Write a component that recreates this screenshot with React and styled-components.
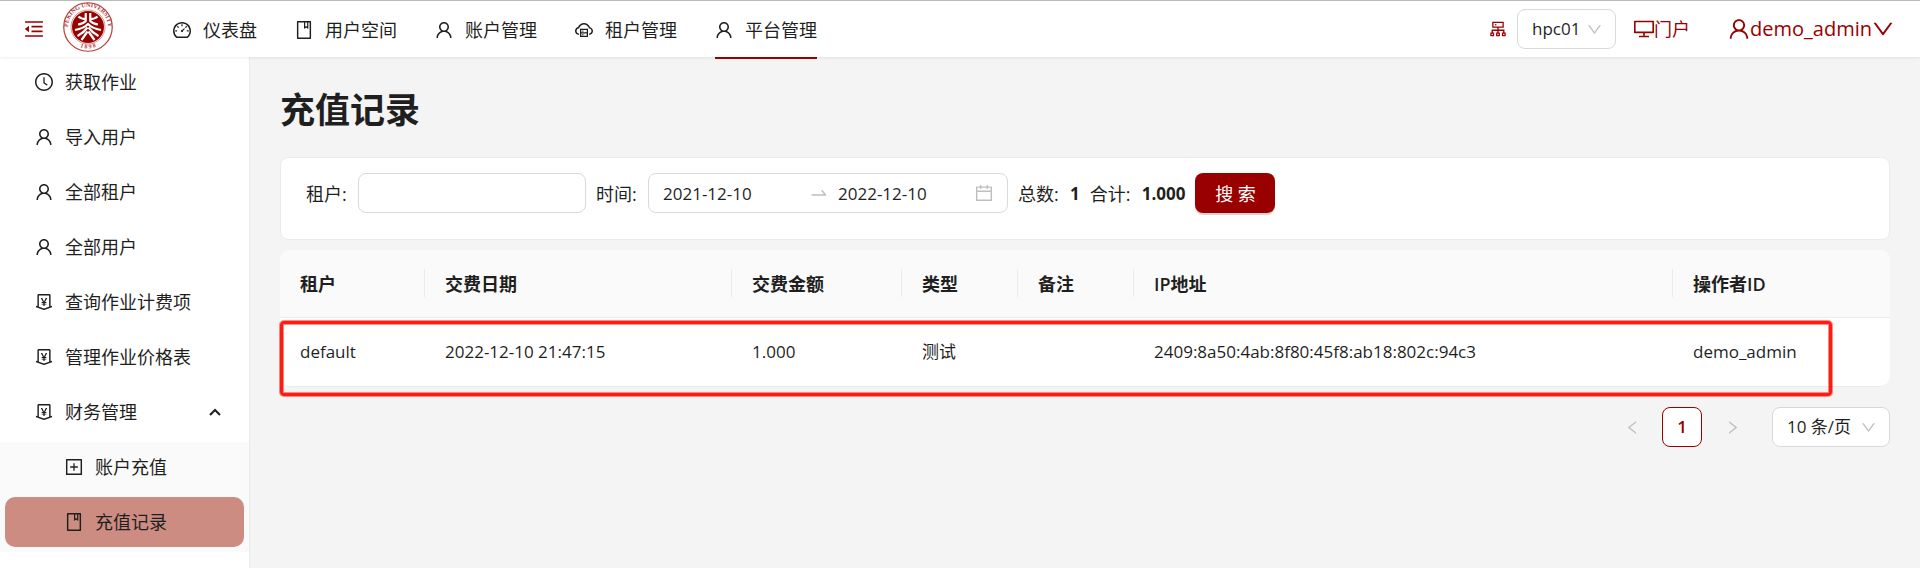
import React from "react";
import styled, { createGlobalStyle, ThemeProvider, css } from "styled-components";
import {
  AiOutlineMenuFold,
  AiOutlineDashboard,
  AiOutlineBook,
  AiOutlineUser,
  AiOutlineCloudServer,
  AiOutlineCluster,
  AiOutlineDesktop,
  AiOutlineDown,
  AiOutlineClockCircle,
  AiOutlineMoneyCollect,
  AiOutlinePlusSquare,
  AiOutlineSwapRight,
  AiOutlineCalendar,
  AiOutlineLeft,
  AiOutlineRight,
} from "react-icons/ai";

const theme = {
  primary: "#990000",
  selected: "#cd8c82",
  text: "#1f1f1f",
  muted: "#bfbfbf",
  border: "#d9d9d9",
  split: "#ebebeb",
  page: "#f4f4f4",
  subtle: "#fafafa",
};

const GlobalStyle = createGlobalStyle`
  *, *::before, *::after { box-sizing: border-box; }
  body {
    margin: 0;
    background: ${theme.page};
    color: ${theme.text};
    font-family: "Open Sans", "Noto Sans CJK SC", sans-serif;
    font-size: 17px;
    line-height: 28px;
  }
  button, input, select { font: inherit; color: inherit; }
`;

const Page = styled.div`
  display: flex;
  flex-direction: column;
  min-height: 100vh;
`;

/* ---------- header ---------- */

const Header = styled.header`
  position: relative;
  z-index: 1;
  display: flex;
  align-items: center;
  height: 57px;
  padding: 0 26px 0 24px;
  background: #fff;
  border-top: 1px solid #bbb;
  box-shadow: 0 1px 3px rgba(0, 0, 0, 0.08);
`;

const IconButton = styled.button`
  display: flex;
  padding: 0;
  border: 0;
  background: none;
  color: ${(p) => p.theme.primary};
  cursor: pointer;
`;

const LogoLink = styled.a`
  display: flex;
  margin: 0 60px 4px 19px;
`;

const Nav = styled.nav`
  display: flex;
  align-self: stretch;
  gap: 38px;
  font-size: 18px;
`;

const NavLink = styled.a`
  display: flex;
  align-items: center;
  gap: 12px;
  padding-top: 2px;
  color: inherit;
  text-decoration: none;
  white-space: nowrap;
  border-bottom: 2px solid ${(p) => (p.$active ? p.theme.primary : "transparent")};
  margin-bottom: -2px;
`;

const HeaderTools = styled.div`
  display: flex;
  align-items: center;
  margin-left: auto;
  color: ${(p) => p.theme.primary};
`;

const ClusterPicker = styled.div`
  display: flex;
  align-items: center;
  gap: 10px;
`;

const PortalLink = styled.a`
  display: flex;
  align-items: center;
  margin: 0 38px 0 18px;
  color: inherit;
  font-size: 18px;
  text-decoration: none;
`;

const UserButton = styled(IconButton)`
  align-items: center;
  font-size: 20px;
`;

const SelectBox = styled.span`
  position: relative;
  display: flex;
  align-items: center;
  width: ${(p) => p.$width}px;
  height: 40px;
  color: ${(p) => p.theme.text};

  svg {
    position: absolute;
    right: 14px;
    color: ${(p) => p.theme.muted};
    pointer-events: none;
  }
`;

const Select = styled.select`
  width: 100%;
  height: 100%;
  padding: 0 14px;
  appearance: none;
  background: #fff;
  border: 1px solid ${(p) => p.theme.border};
  border-radius: 8px;
`;

/* ---------- side menu ---------- */

const Body = styled.div`
  display: flex;
  flex: 1;
`;

const Sidebar = styled.aside`
  flex: 0 0 250px;
  background: #fff;
  border-right: 1px solid ${(p) => p.theme.split};
`;

const Menu = styled.ul`
  display: flex;
  flex-direction: column;
  gap: 5px;
  margin: 0;
  padding: 0;
  list-style: none;
  font-size: 18px;
`;

const SubMenu = styled(Menu)`
  padding-bottom: 5px;
  margin-top: 5px;
  background: ${(p) => p.theme.subtle};
`;

const itemStyle = css`
  display: flex;
  align-items: center;
  gap: 12px;
  height: 50px;
  margin: 0 5px;
  padding: 0 23px 0 ${(p) => (p.$nested ? 60 : 30)}px;
  border-radius: 10px;
`;

const MenuLink = styled.a`
  ${itemStyle}
  color: inherit;
  text-decoration: none;
  background: ${(p) => (p.$active ? p.theme.selected : "transparent")};
`;

const MenuToggle = styled.button`
  ${itemStyle}
  width: calc(100% - 10px);
  border: 0;
  background: none;
  cursor: pointer;
`;

const Arrow = styled.svg`
  margin-left: auto;
`;

/* ---------- content ---------- */

const Content = styled.main`
  flex: 1;
  min-width: 0;
  padding: 30px 30px 40px;
`;

const Title = styled.h1`
  margin: 0 0 24px;
  font-size: 35px;
  line-height: 46px;
  font-weight: 700;
`;

const FilterCard = styled.form`
  display: flex;
  flex-wrap: wrap;
  gap: 10px;
  margin-bottom: 10px;
  padding: 15px 25px 26px;
  background: #fff;
  border: 1px solid ${(p) => p.theme.split};
  border-radius: 8px;
`;

const Field = styled.div`
  display: flex;
  align-items: center;
`;

const Label = styled.label`
  min-width: 52px;
  padding-top: 2px;
  font-size: 18px;
`;

const TextInput = styled.input`
  width: 228px;
  height: 40px;
  padding: 0 14px;
  border: 1px solid ${(p) => p.theme.border};
  border-radius: 8px;
`;

const RangePicker = styled.div`
  display: flex;
  align-items: center;
  width: 360px;
  height: 40px;
  padding: 0 14px;
  border: 1px solid ${(p) => p.theme.border};
  border-radius: 8px;

  svg {
    flex: none;
    color: ${(p) => p.theme.muted};
  }
`;

const DateInput = styled.input`
  flex: 1;
  min-width: 0;
  padding: 2px 0 0;
  border: 0;
  background: none;
`;

const RangeArrow = styled.span`
  display: flex;
  padding: 0 10px;
`;

const Stat = styled.div`
  display: flex;
  align-items: center;
  padding-top: 2px;
`;

const StatName = styled.span`
  min-width: 52px;
  font-size: 18px;
`;

const SearchButton = styled.button`
  width: 80px;
  height: 40px;
  padding: 2px 0 0;
  border: 0;
  border-radius: 8px;
  background: ${(p) => p.theme.primary};
  box-shadow: 0 2px 0 rgba(153, 0, 0, 0.2);
  color: #fff;
  font-size: 18px;
  cursor: pointer;
`;

const TableWrap = styled.div`
  position: relative;
`;

const Table = styled.table`
  width: 100%;
  table-layout: fixed;
  border-collapse: separate;
  border-spacing: 0;
  background: #fff;
  border-radius: 10px;
`;

const HeadCell = styled.th`
  position: relative;
  height: 68px;
  padding: 0 20px;
  background: ${(p) => p.theme.subtle};
  border-bottom: 1px solid ${(p) => p.theme.split};
  text-align: left;
  font-size: 18px;
  font-weight: 600;

  &:first-child { border-top-left-radius: 10px; }
  &:last-child { border-top-right-radius: 10px; }

  &:not(:last-child)::before {
    content: "";
    position: absolute;
    top: 19px;
    right: 0;
    width: 1px;
    height: 28px;
    background: ${(p) => p.theme.split};
  }
`;

const Cell = styled.td`
  height: 69px;
  padding: 0 20px;
  border-bottom: 1px solid ${(p) => p.theme.split};

  &:first-child { border-bottom-left-radius: 10px; }
  &:last-child { border-bottom-right-radius: 10px; }
`;

const Highlight = styled.div`
  position: absolute;
  top: 71px;
  left: 0;
  right: 58px;
  height: 75px;
  border: 3px solid #ff1b10;
  border-radius: 4px;
  box-shadow: 0 0 0 1px rgba(255, 27, 16, 0.5), inset 0 0 0 1px rgba(255, 27, 16, 0.5);
  pointer-events: none;
`;

const Pagination = styled.nav`
  display: flex;
  justify-content: flex-end;
  gap: 10px;
  margin-top: 20px;
`;

const PageButton = styled.button`
  display: flex;
  align-items: center;
  justify-content: center;
  width: 40px;
  height: 40px;
  padding: 0;
  border: 1px solid ${(p) => (p.$current ? p.theme.primary : "transparent")};
  border-radius: 8px;
  background: ${(p) => (p.$current ? "#fff" : "none")};
  color: ${(p) => (p.$current ? p.theme.primary : p.theme.muted)};
  font-weight: 600;
`;

const PageSize = styled.div`
  margin-left: 10px;
`;

/* ---------- drawings ---------- */

function Icon({ of: Glyph, size = 18 }) {
  return <Glyph size={size} viewBox="64 64 896 896" aria-hidden="true" />;
}

function Logo() {
  return (
    <svg width="50" height="50" viewBox="0 0 100 100" role="img" aria-label="Peking University">
      <defs>
        <path id="ringTop" d="M15.4 70 A40 40 0 1 1 84.6 70" />
        <path id="ringBottom" d="M18 79 A44 44 0 0 0 82 79" />
      </defs>
      <circle cx="50" cy="50" r="48.5" fill="#fff" stroke="#b5403f" strokeWidth="2.4" />
      <circle cx="50" cy="50" r="34" fill="#fff" stroke="#c76a6a" strokeWidth="1.5" />
      <circle cx="50" cy="50" r="32" fill="#990000" />
      <g fill="#b03a3a" fontFamily="Liberation Serif, serif" fontWeight="700">
        <text fontSize="12">
          <textPath href="#ringTop" startOffset="50%" textAnchor="middle">PEKING UNIVERSITY</textPath>
        </text>
        <text fontSize="12">
          <textPath href="#ringBottom" startOffset="50%" textAnchor="middle">1 8 9 8</textPath>
        </text>
      </g>
      <g fill="none" stroke="#fff" strokeWidth="4.4" strokeLinecap="butt" strokeLinejoin="round">
        <path d="M45.5 22V38Q40 44 30 45" />
        <path d="M54.5 22V38Q60 44 70 45" />
        <path d="M31 29Q36 34 46 34" />
        <path d="M69 29Q64 34 54 34" />
        <path d="M51 43Q42 53 24 56" />
        <path d="M49 43Q58 53 76 56" />
        <path d="M49 51Q41 62 29 68" />
        <path d="M51 51Q59 62 71 68" />
        <path d="M49 59Q42 69 37 76" />
        <path d="M51 59Q58 69 63 76" />
      </g>
    </svg>
  );
}

/* ---------- data ---------- */

const navItems = [
  { label: "仪表盘", icon: AiOutlineDashboard },
  { label: "用户空间", icon: AiOutlineBook },
  { label: "账户管理", icon: AiOutlineUser },
  { label: "租户管理", icon: AiOutlineCloudServer },
  { label: "平台管理", icon: AiOutlineUser, active: true },
];

const menuItems = [
  { label: "获取作业", icon: AiOutlineClockCircle },
  { label: "导入用户", icon: AiOutlineUser },
  { label: "全部租户", icon: AiOutlineUser },
  { label: "全部用户", icon: AiOutlineUser },
  { label: "查询作业计费项", icon: AiOutlineMoneyCollect },
  { label: "管理作业价格表", icon: AiOutlineMoneyCollect },
];

const financeItems = [
  { label: "账户充值", icon: AiOutlinePlusSquare },
  { label: "充值记录", icon: AiOutlineBook, active: true },
];

const columns = [
  { title: "租户", width: 145 },
  { title: "交费日期", width: 307 },
  { title: "交费金额", width: 170 },
  { title: "类型", width: 116 },
  { title: "备注", width: 116 },
  { title: "IP地址", width: 539 },
  { title: "操作者ID", width: 217 },
];

const records = [
  ["default", "2022-12-10 21:47:15", "1.000", "测试", "", "2409:8a50:4ab:8f80:45f8:ab18:802c:94c3", "demo_admin"],
];

export default function App() {
  return (
    <ThemeProvider theme={theme}>
      <GlobalStyle />
      <Page>
        <Header>
          <IconButton type="button" aria-label="收起菜单">
            <Icon of={AiOutlineMenuFold} size={20} />
          </IconButton>
          <LogoLink href="#">
            <Logo />
          </LogoLink>
          <Nav>
            {navItems.map((item) => (
              <NavLink key={item.label} href="#" $active={item.active}>
                <Icon of={item.icon} />
                {item.label}
              </NavLink>
            ))}
          </Nav>
          <HeaderTools>
            <ClusterPicker>
              <Icon of={AiOutlineCluster} />
              <SelectBox $width={99}>
                <Select aria-label="集群" defaultValue="hpc01">
                  <option>hpc01</option>
                </Select>
                <Icon of={AiOutlineDown} size={15} />
              </SelectBox>
            </ClusterPicker>
            <PortalLink href="#">
              <Icon of={AiOutlineDesktop} size={20} />
              门户
            </PortalLink>
            <UserButton type="button">
              <Icon of={AiOutlineUser} size={22} />
              demo_admin
              <Icon of={AiOutlineDown} size={22} />
            </UserButton>
          </HeaderTools>
        </Header>
        <Body>
          <Sidebar>
            <Menu>
              {menuItems.map((item) => (
                <li key={item.label}>
                  <MenuLink href="#">
                    <Icon of={item.icon} />
                    {item.label}
                  </MenuLink>
                </li>
              ))}
              <li>
                <MenuToggle type="button" aria-expanded="true">
                  <Icon of={AiOutlineMoneyCollect} />
                  财务管理
                  <Arrow width="12" height="8" viewBox="0 0 12 8" fill="none" stroke="currentColor" strokeWidth="2">
                    <path d="M1 7 6 2l5 5" />
                  </Arrow>
                </MenuToggle>
                <SubMenu>
                  {financeItems.map((item) => (
                    <li key={item.label}>
                      <MenuLink href="#" $nested $active={item.active}>
                        <Icon of={item.icon} />
                        {item.label}
                      </MenuLink>
                    </li>
                  ))}
                </SubMenu>
              </li>
            </Menu>
          </Sidebar>
          <Content>
            <Title>充值记录</Title>
            <FilterCard>
              <Field>
                <Label htmlFor="tenant">租户:</Label>
                <TextInput id="tenant" type="text" />
              </Field>
              <Field>
                <Label htmlFor="from">时间:</Label>
                <RangePicker>
                  <DateInput id="from" type="text" defaultValue="2021-12-10" />
                  <RangeArrow>
                    <Icon of={AiOutlineSwapRight} />
                  </RangeArrow>
                  <DateInput type="text" aria-label="结束日期" defaultValue="2022-12-10" />
                  <Icon of={AiOutlineCalendar} />
                </RangePicker>
              </Field>
              <Stat>
                <StatName>总数:</StatName>
                <strong>1</strong>
              </Stat>
              <Stat>
                <StatName>合计:</StatName>
                <strong>1.000</strong>
              </Stat>
              <SearchButton type="button">搜 索</SearchButton>
            </FilterCard>
            <TableWrap>
              <Table>
                <colgroup>
                  {columns.map((c) => (
                    <col key={c.title} width={c.width} />
                  ))}
                </colgroup>
                <thead>
                  <tr>
                    {columns.map((c) => (
                      <HeadCell key={c.title} scope="col">{c.title}</HeadCell>
                    ))}
                  </tr>
                </thead>
                <tbody>
                  {records.map((row) => (
                    <tr key={row[1]}>
                      {row.map((value, i) => (
                        <Cell key={columns[i].title}>{value}</Cell>
                      ))}
                    </tr>
                  ))}
                </tbody>
              </Table>
              <Highlight />
            </TableWrap>
            <Pagination aria-label="分页">
              <PageButton type="button" aria-label="上一页">
                <Icon of={AiOutlineLeft} size={15} />
              </PageButton>
              <PageButton type="button" $current aria-current="page">1</PageButton>
              <PageButton type="button" aria-label="下一页">
                <Icon of={AiOutlineRight} size={15} />
              </PageButton>
              <PageSize>
                <SelectBox $width={118}>
                  <Select aria-label="每页条数" defaultValue="10 条/页">
                    <option>10 条/页</option>
                  </Select>
                  <Icon of={AiOutlineDown} size={15} />
                </SelectBox>
              </PageSize>
            </Pagination>
          </Content>
        </Body>
      </Page>
    </ThemeProvider>
  );
}
